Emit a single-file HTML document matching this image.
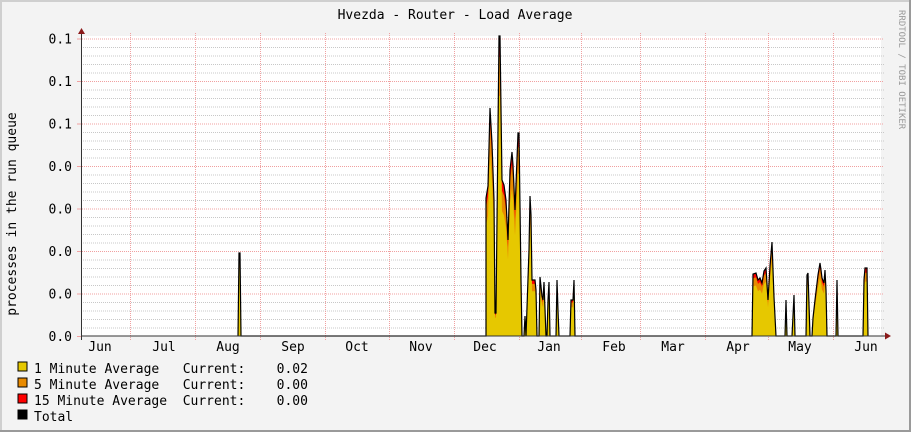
<!DOCTYPE html>
<html><head><meta charset="utf-8"><style>
html,body{margin:0;padding:0;background:#f3f3f3}
svg{display:block}
text{font-family:"DejaVu Sans Mono","Liberation Mono",monospace;font-size:13px;fill:#000}
</style></head><body>
<svg id="s" width="911" height="432" xmlns="http://www.w3.org/2000/svg">
<rect x="0" y="0" width="911" height="432" fill="#f3f3f3"/>
<rect x="0" y="0" width="911" height="2" fill="#cfcfcf"/>
<rect x="0" y="0" width="2" height="432" fill="#cfcfcf"/>
<rect x="909" y="0" width="2" height="432" fill="#9a9a9a"/>
<rect x="0" y="430" width="911" height="2" fill="#9a9a9a"/>
<rect x="81" y="36" width="800" height="300" fill="#fff"/>
<g id="grid"></g>
<g id="data"></g>
<line x1="81" y1="336" x2="887" y2="336" stroke="#333" stroke-width="1"/>
<line x1="81.5" y1="30" x2="81.5" y2="340" stroke="#333" stroke-width="1"/>
<polygon points="78,34 85,34 81.5,28" fill="#8b1a1a"/>
<polygon points="885,332.5 885,339.5 891,336" fill="#8b1a1a"/>
<text x="455" y="19" text-anchor="middle">Hvezda - Router - Load Average</text>
<text transform="translate(16,214) rotate(-90)" text-anchor="middle">processes in the run queue</text>
<text transform="translate(899,10) rotate(90)" style="font-size:9px;fill:#999">RRDTOOL / TOBI OETIKER</text>
<g id="ylab" text-anchor="end"></g>
<g id="xlab" text-anchor="middle"></g>
<rect x="18" y="362" width="9" height="9" fill="#e6c800" stroke="#000"/>
<rect x="18" y="378" width="9" height="9" fill="#e88a00" stroke="#000"/>
<rect x="18" y="394" width="9" height="9" fill="#f00" stroke="#000"/>
<rect x="18" y="410" width="9" height="9" fill="#000" stroke="#000"/>
<text x="34" y="373" xml:space="preserve">1 Minute Average   Current:    0.02</text>
<text x="34" y="389" xml:space="preserve">5 Minute Average   Current:    0.00</text>
<text x="34" y="405" xml:space="preserve">15 Minute Average  Current:    0.00</text>
<text x="34" y="421">Total</text>
</svg>
<script>
var NS="http://www.w3.org/2000/svg";
function el(p,t,a){var e=document.createElementNS(NS,t);for(var k in a)e.setAttribute(k,a[k]);p.appendChild(e);return e;}
var g=document.getElementById('grid');
for(var i=0;i<=35;i++){var y=336-i*8.5;if(i%5==0)continue;el(g,'line',{x1:81,y1:y+.5,x2:884,y2:y+.5,stroke:'#c8c8c8','stroke-dasharray':'1,1'});}
var ylab=document.getElementById('ylab');
var yl=['0.0','0.0','0.0','0.0','0.0','0.1','0.1','0.1'];
for(var i=0;i<8;i++){var y=336-i*42.5;if(i>0)el(g,'line',{x1:78,y1:y+.5,x2:884,y2:y+.5,stroke:'#f0a0a0','stroke-dasharray':'1,1'});el(g,'line',{x1:77,y1:y+.5,x2:81,y2:y+.5,stroke:'#f0a0a0'});var t=el(ylab,'text',{x:72,y:y+5});t.textContent=yl[i];}
var vx=[130,195,260,325,389,454,519,581,640,705,768,833];
vx.forEach(function(x){el(g,'line',{x1:x+.5,y1:33,x2:x+.5,y2:340,stroke:'#f0a0a0','stroke-dasharray':'1,1'});});
var xl=document.getElementById('xlab');
[['Jun',100],['Jul',164],['Aug',228],['Sep',293],['Oct',357],['Nov',421],['Dec',485],['Jan',549],['Feb',614],['Mar',673],['Apr',738],['May',800],['Jun',866]].forEach(function(a){var t=el(xl,'text',{x:a[1],y:351});t.textContent=a[0];});
var pts=[[238,336],[239,253],[240,253],[241,336],
[486,336],[486,198],[488,186],[490,108],[492,143],[494,200],[495,313],[496,313],[499,36],[500,36],[502,180],[504,185],[506,200],[508,240],[510,170],[512,152],[513,165],[515,210],[518,133],[519,133],[521,280],[522,336],[524,336],[525,316],[526,336],[529,250],[530,196],[531,215],[532,280],[535,280],[536,290],[537,336],[539,336],[540,277],[542,296],[543,300],[544,282],[546,336],[547,336],[548,300],[549,282],[550,336],[552,336],[556,336],[557,280],[558,310],[559,336],[570,336],[571,300],[573,300],[574,280],[575,336],
[752,336],[753,274],[756,273],[758,280],[760,278],[762,283],[764,271],[766,268],[768,300],[770,266],[772,242],[774,297],[776,336],[785,336],[786,300],[787,336],[792,336],[794,295],[795,336],[806,336],[807,275],[808,273],[810,336],[812,336],[813,318],[815,300],[818,275],[820,263],[821,270],[822,278],[824,283],[825,270],[826,290],[827,336],[836,336],[837,280],[838,336],[863,336],[864,280],[865,268],[867,268],[868,336]];
var d=document.getElementById('data');
function poly(f,c){var s=pts.map(function(p){return p[0]+','+(336-(336-p[1])*f).toFixed(1)}).join(' ');el(d,'polygon',{points:s,fill:c});}
poly(1,'#f00');poly(0.93,'#e88a00');poly(0.8,'#e6c800');
el(d,'polyline',{points:pts.map(function(p){return p[0]+','+p[1]}).join(' '),fill:'none',stroke:'#000','stroke-width':1.2});
</script>
</body></html>
